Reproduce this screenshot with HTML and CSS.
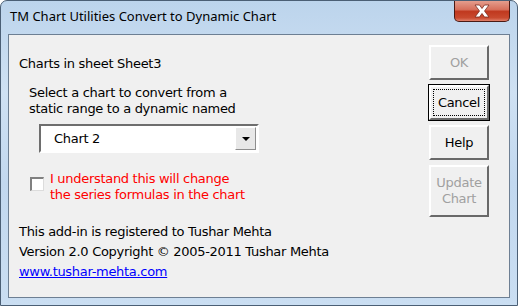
FILE: index.html
```html
<!DOCTYPE html>
<html lang="en">
<head>
    <meta charset="UTF-8">
    <title>TM Chart Utilities Convert to Dynamic Chart</title>
    <link rel="stylesheet" href="styles.css">
</head>
<body>
    <div class="window">
        <!-- Pasek tytulu -->
        <div class="titlebar">
            <span class="title">TM Chart Utilities Convert to Dynamic Chart</span>
            <button class="close-btn">
                <svg width="18" height="14" viewBox="0 0 18 14">
                    <path d="M2 1 L6.5 1 L9 4.5 L11.5 1 L16 1 L11.5 7 L16 13 L11.5 13 L9 9.5 L6.5 13 L2 13 L6.5 7 Z" fill="#fff" stroke="#7a2c20" stroke-width="0.8"/>
                </svg>
            </button>
        </div>

        <!-- Obszar okna -->
        <div class="client">
            <div class="left-col">
                <div class="sheet-label">Charts in sheet Sheet3</div>
                <div class="select-label">Select a chart to convert from a<br>static range to a dynamic named</div>
                <div class="combo">
                    <div class="combo-value">Chart 2</div>
                    <div class="combo-arrow"><span class="tri"></span></div>
                </div>
                <div class="confirm">
                    <span class="checkbox"></span>
                    <span class="confirm-text">I understand this will change<br>the series formulas in the chart</span>
                </div>
                <div class="info">
                    <div>This add-in is registered to Tushar Mehta</div>
                    <div>Version 2.0 Copyright &copy; 2005-2011 Tushar Mehta</div>
                    <a class="link" href="#">www.tushar-mehta.com</a>
                </div>
            </div>
            <div class="right-col">
                <button class="btn disabled">OK</button>
                <button class="btn default"><span class="focus">Cancel</span></button>
                <button class="btn">Help</button>
                <button class="btn disabled tall">Update<br>Chart</button>
            </div>
        </div>
    </div>
</body>
</html>
```

FILE: styles.css
```css
/* Styl ogolny */
body {
    margin: 0;
    padding: 0;
    background: #ffffff;
    font-family: "DejaVu Sans", Tahoma, sans-serif;
    font-size: 13px;
    letter-spacing: -0.3px;
    color: #000;
}

/* Okno */
.window {
    width: 518px;
    height: 306px;
    box-sizing: border-box;
    border: 1px solid #4b5f75;
    border-radius: 7px 7px 0 0;
    background: linear-gradient(180deg, #bcd4ec 0%, #cfe1f3 30%, #c2d8ef 60%, #cadef2 100%);
    overflow: hidden;
    display: flex;
    flex-direction: column;
}

/* Pasek tytulu */
.titlebar {
    height: 33px;
    display: flex;
    align-items: flex-start;
    justify-content: space-between;
    flex-shrink: 0;
}

.title {
    font-family: "Noto Sans", "Open Sans", sans-serif;
    font-size: 13px;
    letter-spacing: 0;
    color: #000;
    padding: 6px 0 0 9px;
}

.close-btn {
    width: 56px;
    height: 22px;
    margin-right: 7px;
    margin-top: -1px;
    border: 1px solid #4a1a14;
    border-top: none;
    border-radius: 0 0 5px 5px;
    background: linear-gradient(180deg, #e6a393 0%, #d7705c 45%, #c0391f 55%, #c94a2f 85%, #e0806a 100%);
    display: flex;
    align-items: center;
    justify-content: center;
    padding: 0;
}

/* Obszar klienta */
.client {
    margin: 0 7px 0 7px;
    height: 264px;
    box-sizing: border-box;
    border: 1px solid #6d7f93;
    background: #f0f0f0;
    display: flex;
}

.left-col {
    flex: 1;
    padding: 21px 0 0 10px;
}

.sheet-label {
    line-height: 16px;
}

.select-label {
    margin: 13px 0 0 10px;
    line-height: 16px;
}

/* Lista rozwijana */
.combo {
    margin: 7px 0 0 20px;
    width: 220px;
    height: 29px;
    box-sizing: border-box;
    border-top: 2px solid #6e6e6e;
    border-left: 2px solid #6e6e6e;
    border-right: 2px solid #ffffff;
    border-bottom: 2px solid #ffffff;
    background: #fff;
    display: flex;
}

.combo-value {
    flex: 1;
    padding: 5px 0 0 13px;
}

.combo-arrow {
    width: 19px;
    margin: 1px 1px 1px 0;
    background: #e8e8e8;
    border-left: 1px solid #fff;
    border-top: 1px solid #fff;
    border-right: 1px solid #8e8e8e;
    border-bottom: 1px solid #8e8e8e;
    display: flex;
    align-items: center;
    justify-content: center;
}

.tri {
    width: 0;
    height: 0;
    border-left: 4px solid transparent;
    border-right: 4px solid transparent;
    border-top: 4px solid #000;
}

/* Potwierdzenie */
.confirm {
    margin: 18px 0 0 11px;
    display: flex;
    align-items: flex-start;
}

.checkbox {
    width: 14px;
    height: 14px;
    box-sizing: border-box;
    margin-top: 6px;
    border-top: 2px solid #808080;
    border-left: 2px solid #808080;
    border-right: 1px solid #dcdcdc;
    border-bottom: 1px solid #dcdcdc;
    background: #fff;
}

.confirm-text {
    color: #ff0000;
    margin-left: 6px;
    line-height: 16px;
}

.info {
    margin-top: 19px;
    line-height: 20px;
}

.link {
    color: #0000ff;
    text-decoration: underline;
}

/* Przyciski */
.right-col {
    width: 80px;
    padding-top: 10px;
    display: flex;
    flex-direction: column;
    gap: 5px;
}

.btn {
    width: 60px;
    height: 35px;
    padding: 0;
    font-family: "DejaVu Sans", Tahoma, sans-serif;
    font-size: 13px;
    letter-spacing: -0.3px;
    color: #000;
    background: #f0f0f0;
    border-top: 2px solid #ffffff;
    border-left: 2px solid #ffffff;
    border-right: 2px solid #696969;
    border-bottom: 2px solid #696969;
    line-height: 16px;
}

.btn.disabled {
    color: #a0a0a0;
}

.btn.tall {
    height: 52px;
}

.btn.default {
    outline: 1px solid #000;
    outline-offset: 0;
    display: flex;
    align-items: center;
    justify-content: center;
}

.focus {
    display: block;
    width: 52px;
    height: 27px;
    box-sizing: border-box;
    border: 1px dotted #000;
    line-height: 25px;
}
```
